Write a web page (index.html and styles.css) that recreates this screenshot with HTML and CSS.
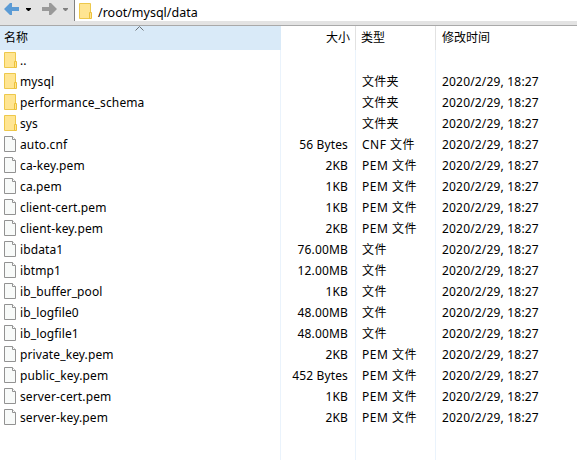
FILE: index.html
```
<!DOCTYPE html>
<html lang="zh-CN">
<head>
<meta charset="utf-8">
<title>/root/mysql/data</title>
<link rel="stylesheet" href="styles.css">
</head>
<body>
<svg width="0" height="0" class="defs">
  <symbol id="folder" viewBox="0 0 13 16">
    <path d="M.5.5h11v15H.5z" fill="#ffe592" stroke="#edc84c"/>
    <path d="M10.5 9.5h2v6h-2z" fill="#ffe592" stroke="#edc13b"/>
  </symbol>
  <symbol id="file" viewBox="0 0 13 16">
    <path d="M.5.5h8l3 3v12H.5z" fill="#f8faf9" stroke="#929292"/>
    <path d="M8.5.5v3h3" fill="#fff" stroke="#929292"/>
  </symbol>
</svg>
<header class="toolbar">
  <div class="nav">
    <svg width="74" height="21" viewBox="0 0 74 21">
      <path d="M4 9l6-6h2v4h7v4h-7v4h-2z" fill="#5b9bd5"/>
      <path d="M26 8h5v1l-2 2h-1l-2-2z" fill="#000"/>
      <path d="M57 9l-6-6h-2v4h-7v4h7v4h2z" fill="#999"/>
      <path d="M63 8h5v1l-2 2h-1l-2-2z" fill="#808080"/>
    </svg>
  </div>
  <div class="address"><svg class="icon"><use href="#folder"/></svg><span>/root/mysql/data</span></div>
</header>
<main class="list">
  <div class="row head">
    <div class="name">名称<svg class="sort" width="9" height="5" viewBox="0 0 9 5"><path d="M.5 4.5l4-4 4 4" fill="none" stroke="#6d7377"/></svg></div>
    <div class="size">大小</div><div class="type">类型</div><div class="date">修改时间</div>
  </div>
  <div id="rows" class="rows"></div>
  <div class="row rest"><div class="name"></div><div class="size"></div><div class="type"></div><div class="date"></div></div>
</main>
<script src="list.js"></script>
</body>
</html>
```
FILE: styles.css
```
* { box-sizing: border-box; }
body {
  margin: 0;
  width: 577px;
  height: 460px;
  overflow: hidden;
  display: flex;
  flex-direction: column;
  background: #fff;
  color: #000;
  font: 12px/20px "Noto Sans", "Noto Sans CJK SC", sans-serif;
}
.defs { position: absolute; }
.toolbar {
  flex: none;
  display: flex;
  height: 26px;
  padding-bottom: 4px;
  background: #e3e3e3;
  border-bottom: 1px solid #a9a9a9;
}
.nav { width: 75px; border-right: 1px solid #808080; }
.nav svg { display: block; }
.address {
  flex: 1;
  display: flex;
  padding: 3px 0 0 4px;
  background: #fff;
  font-size: 12.5px;
  line-height: 19px;
}
.address span { margin-left: 6px; }
.icon { flex: none; width: 13px; height: 16px; }
.list { flex: 1; display: flex; flex-direction: column; }
.row {
  display: grid;
  grid-template-columns: 281px 75px 80px 1fr;
  height: 21px;
  flex: none;
}
.row > div { white-space: nowrap; }
.name, .size, .type { border-right: 1px solid #eaf3fc; }
.name { display: flex; padding-left: 4px; }
.name span { margin-left: 3px; }
.rows .name { padding-top: 2px; line-height: 17px; letter-spacing: 0.12px; }
.rows .size, .rows .type, .rows .date { padding-top: 2px; line-height: 17px; }
.rows .size { padding-right: 7px; letter-spacing: 0.15px; }
.rows .type { letter-spacing: 0.5px; }
.rows .type.folder { letter-spacing: 0.2px; }
.rows .date { letter-spacing: 0.18px; }
.size { text-align: right; padding-right: 5px; }
.type, .date { padding-left: 6px; }
.head { height: 24px; line-height: 24px; }
.head .name { position: relative; background: #d9eaf8; border-color: #d9eaf8; }
.head .size, .head .type { border-color: #e2e2e2; }
.head .type { padding-left: 5px; }
.sort { position: absolute; left: 135px; top: 0; }
.rest { flex: 1; }
```
FILE: list.js
```
const files = [
  ["..", "", ""],
  ["mysql", "", "文件夹"],
  ["performance_schema", "", "文件夹"],
  ["sys", "", "文件夹"],
  ["auto.cnf", "56 Bytes", "CNF 文件"],
  ["ca-key.pem", "2KB", "PEM 文件"],
  ["ca.pem", "1KB", "PEM 文件"],
  ["client-cert.pem", "1KB", "PEM 文件"],
  ["client-key.pem", "2KB", "PEM 文件"],
  ["ibdata1", "76.00MB", "文件"],
  ["ibtmp1", "12.00MB", "文件"],
  ["ib_buffer_pool", "1KB", "文件"],
  ["ib_logfile0", "48.00MB", "文件"],
  ["ib_logfile1", "48.00MB", "文件"],
  ["private_key.pem", "2KB", "PEM 文件"],
  ["public_key.pem", "452 Bytes", "PEM 文件"],
  ["server-cert.pem", "1KB", "PEM 文件"],
  ["server-key.pem", "2KB", "PEM 文件"]
];
document.getElementById("rows").innerHTML = files.map(([name, size, type], i) => `
  <div class="row">
    <div class="name"><svg class="icon"><use href="#${i < 4 ? "folder" : "file"}"/></svg><span>${name}</span></div>
    <div class="size">${size}</div>
    <div class="type${i < 4 ? " folder" : ""}">${type}</div>
    <div class="date">${i ? "2020/2/29, 18:27" : ""}</div>
  </div>`).join("");
```
